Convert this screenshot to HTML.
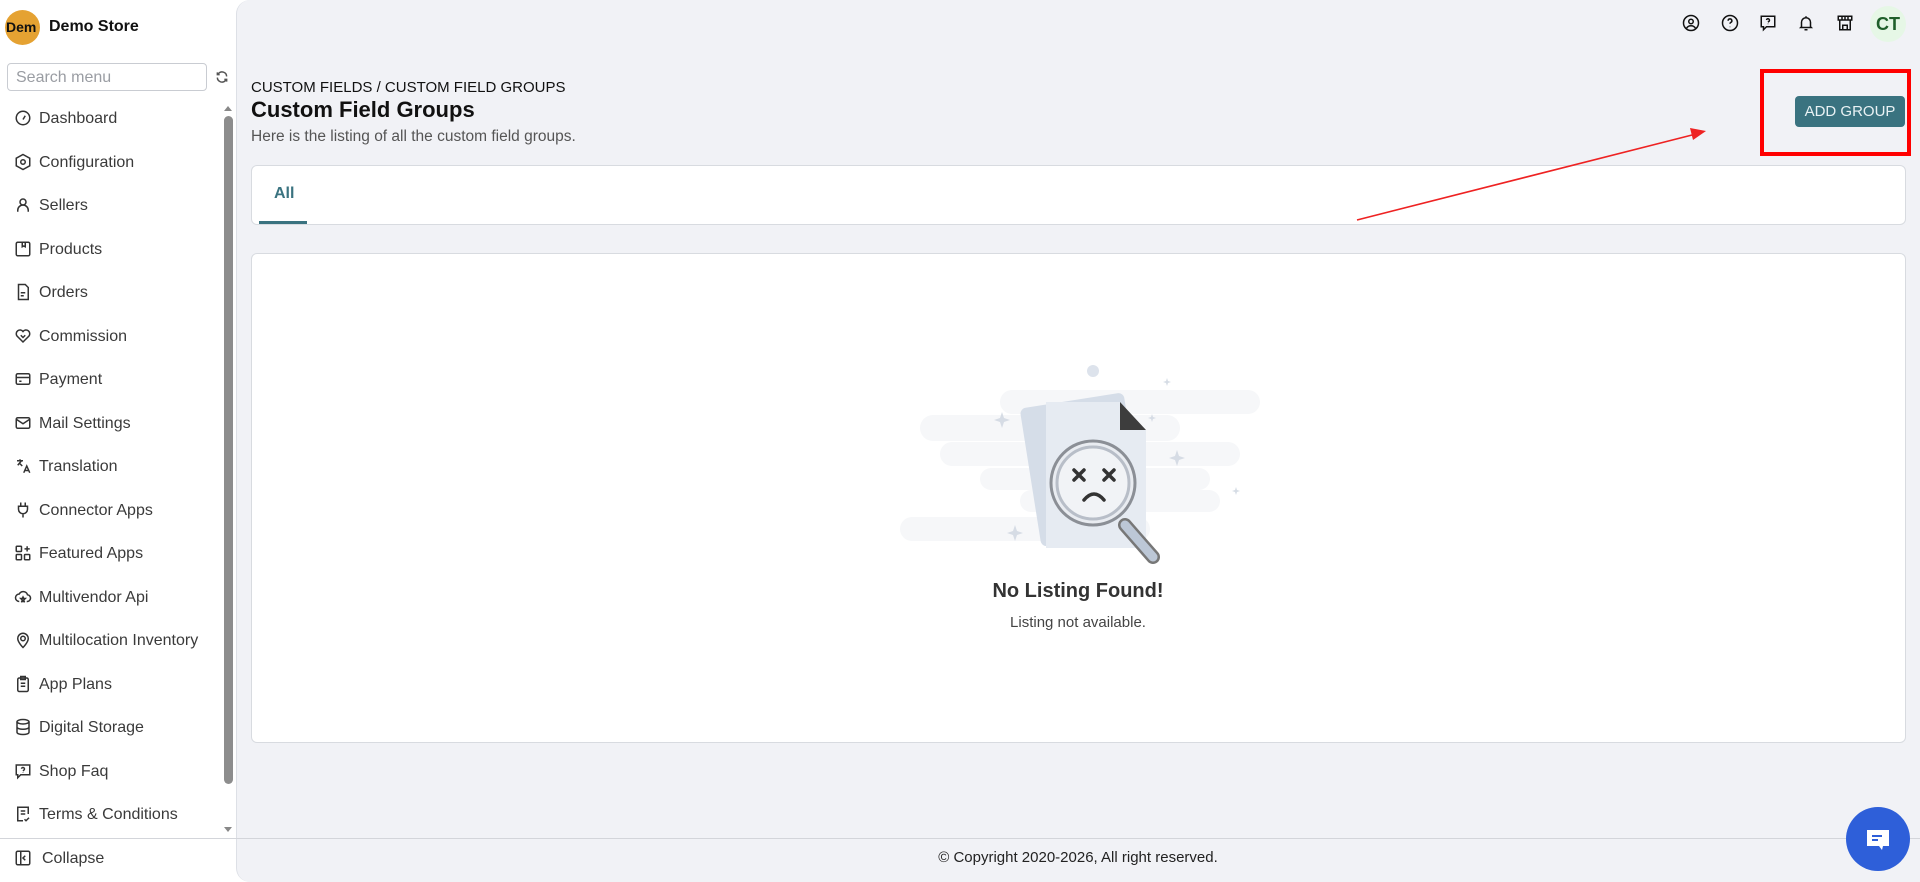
<!DOCTYPE html>
<html><head><meta charset="utf-8"><style>
*{box-sizing:border-box;margin:0;padding:0}
body{width:1920px;height:882px;overflow:hidden;background:#fff;font-family:"Liberation Sans",sans-serif;position:relative;color:#222}
.side{position:absolute;left:0;top:0;width:236px;height:882px;background:#fff}
.main{position:absolute;left:236px;top:0;width:1684px;height:882px;background:#f1f2f6;border-left:1px solid #dde0e6;border-radius:14px 0 0 14px}
.logo{position:absolute;left:5px;top:10px;width:35px;height:35px;border-radius:50%;background:#e5a232;font-size:14px;font-weight:bold;line-height:35px;overflow:hidden;white-space:nowrap;color:#111;padding-left:1px}
.store{position:absolute;left:49px;top:18px;font-size:16px;font-weight:bold;color:#111}
.search{position:absolute;left:7px;top:63px;width:200px;height:28px;border:1px solid #c9ccd2;border-radius:4px;font-size:16px;color:#9a9da3;padding:5px 8px}
.mi{position:absolute;left:14px;height:44px;display:flex;align-items:center;font-size:16px;color:#3a3a3a;white-space:nowrap}
.mi svg{width:18px;height:18px;margin-right:7px;stroke:#333;fill:none;stroke-width:2;margin-top:-2px}
.sb{position:absolute;left:224px;top:116px;width:9px;height:668px;background:#8d8d8d;border-radius:5px}
.bar{position:absolute;left:0;top:838px;width:1920px;height:1px;background:#d3d5da}
.card{position:absolute;background:#fff;border:1px solid #d8dbe0;border-radius:6px}
.btn{position:absolute;left:1795px;top:96px;width:110px;height:31px;background:#3a7380;color:#e9f2f4;border-radius:4px;font-size:15px;text-align:center;line-height:31px}
.hi svg{position:absolute;top:14px;width:18px;height:18px;fill:none;stroke:#111;stroke-width:2}
</style></head><body>
<div class="side">
<div class="logo">Dem</div>
<div class="store">Demo Store</div>
<div class="search">Search menu</div>
<svg style="position:absolute;left:215px;top:70px" width="14" height="14" viewBox="0 0 24 24" fill="none" stroke="#555" stroke-width="2.5"><path d="M20 11a8 8 0 0 0-14-5l-2 2M4 4v4h4M4 13a8 8 0 0 0 14 5l2-2M20 20v-4h-4"/></svg>
<svg style="position:absolute;left:223px;top:104px" width="10" height="8"><path d="M1 7 5 2 9 7z" fill="#888"/></svg>
<svg style="position:absolute;left:223px;top:826px" width="10" height="8"><path d="M1 1 5 6 9 1z" fill="#888"/></svg>
<div class="sb"></div>
<div class="mi" style="top:97px"><svg viewBox="0 0 24 24"><circle cx="12" cy="12" r="9"/><path d="M12 14l3-5"/></svg>Dashboard</div>
<div class="mi" style="top:141px"><svg viewBox="0 0 24 24"><path d="M12 2l9 5v10l-9 5-9-5V7z"/><circle cx="12" cy="12" r="3"/></svg>Configuration</div>
<div class="mi" style="top:184px"><svg viewBox="0 0 24 24"><circle cx="12" cy="8" r="4"/><path d="M5 21v-2a7 7 0 0 1 14 0v2"/></svg>Sellers</div>
<div class="mi" style="top:228px"><svg viewBox="0 0 24 24"><rect x="3" y="3" width="18" height="18" rx="2"/><path d="M11 3v6l2-1 2 1V3"/></svg>Products</div>
<div class="mi" style="top:271px"><svg viewBox="0 0 24 24"><path d="M6 2h9l4 4v16H6z"/><path d="M9 13h6M9 17h4"/></svg>Orders</div>
<div class="mi" style="top:315px"><svg viewBox="0 0 24 24"><path d="M12 20l-8-8a5 5 0 0 1 8-6 5 5 0 0 1 8 6z"/><path d="M9 11l3 3 3-3"/></svg>Commission</div>
<div class="mi" style="top:358px"><svg viewBox="0 0 24 24"><rect x="3" y="5" width="18" height="14" rx="2"/><path d="M3 10h18M7 15h3"/></svg>Payment</div>
<div class="mi" style="top:402px"><svg viewBox="0 0 24 24"><rect x="3" y="5" width="18" height="14" rx="2"/><path d="M3 7l9 6 9-6"/></svg>Mail Settings</div>
<div class="mi" style="top:445px"><svg viewBox="0 0 24 24"><path d="M4 5h8M8 3v2M5 11l5-6M8 9l3 3M13 21l4-9 4 9M14 18h6"/></svg>Translation</div>
<div class="mi" style="top:489px"><svg viewBox="0 0 24 24"><path d="M9 2v5M15 2v5M6 7h12v4a6 6 0 0 1-12 0zM12 17v5"/></svg>Connector Apps</div>
<div class="mi" style="top:532px"><svg viewBox="0 0 24 24"><rect x="3" y="3" width="7" height="7" rx="1"/><rect x="3" y="14" width="7" height="7" rx="1"/><rect x="14" y="14" width="7" height="7" rx="1"/><path d="M17.5 3v7M14 6.5h7"/></svg>Featured Apps</div>
<div class="mi" style="top:576px"><svg viewBox="0 0 24 24"><path d="M7 18a5 5 0 0 1 0-10 6 6 0 0 1 11 1 4 4 0 0 1-1 9"/><path d="M12 12l1 2h2l-2 2 1 3-2-2-2 2 1-3-2-2h2z"/></svg>Multivendor Api</div>
<div class="mi" style="top:619px"><svg viewBox="0 0 24 24"><path d="M12 22s7-7 7-12a7 7 0 0 0-14 0c0 5 7 12 7 12z"/><circle cx="12" cy="10" r="3"/></svg>Multilocation Inventory</div>
<div class="mi" style="top:663px"><svg viewBox="0 0 24 24"><rect x="5" y="4" width="14" height="18" rx="2"/><path d="M9 2h6v4H9zM9 11h6M9 15h6"/></svg>App Plans</div>
<div class="mi" style="top:706px"><svg viewBox="0 0 24 24"><ellipse cx="12" cy="5" rx="8" ry="3"/><path d="M4 5v14c0 2 4 3 8 3s8-1 8-3V5M4 12c0 2 4 3 8 3s8-1 8-3"/></svg>Digital Storage</div>
<div class="mi" style="top:750px"><svg viewBox="0 0 24 24"><path d="M3 4h18v13H9l-4 4v-4H3z"/><path d="M10 9a2 2 0 1 1 3 2l-1 1M12 14v.5"/></svg>Shop Faq</div>
<div class="mi" style="top:793px"><svg viewBox="0 0 24 24"><path d="M19 12V3H5v18h7"/><path d="M9 8h6M9 12h6M14 19l2 2 4-4"/></svg>Terms &amp; Conditions</div>
<div class="mi" style="top:837px"><svg viewBox="0 0 24 24" style="margin-right:10px"><rect x="3" y="3" width="18" height="18" rx="2"/><path d="M9 3v18M15 9l-3 3 3 3"/></svg>Collapse</div>
</div>
<div class="main"></div>
<div class="bar"></div>
<div style="position:absolute;left:236px;width:1684px;top:849px;text-align:center;font-size:15px;color:#222">© Copyright 2020-2026, All right reserved.</div>
<div class="hi">
<svg style="left:1682px" viewBox="0 0 24 24"><circle cx="12" cy="12" r="10"/><circle cx="12" cy="10" r="3"/><path d="M6 19a7 7 0 0 1 12 0"/></svg>
<svg style="left:1721px" viewBox="0 0 24 24"><circle cx="12" cy="12" r="10"/><path d="M9.5 9a2.5 2.5 0 1 1 3.5 2.3c-.7.4-1 .9-1 1.7M12 17v.5"/></svg>
<svg style="left:1759px" viewBox="0 0 24 24"><path d="M3 3h18v14H10l-4 4v-4H3z"/><path d="M10 8a2 2 0 1 1 3 2l-1 1M12 13v.5"/></svg>
<svg style="left:1797px" viewBox="0 0 24 24"><path d="M6 17V11a6 6 0 0 1 12 0v6l1 1H5zM10 21h4M12 3v2"/></svg>
<svg style="left:1836px" viewBox="0 0 24 24"><path d="M3 3h18v5H3zM5 8v13h14V8M9 21v-6h6v6M8 3v5M12 3v5M16 3v5"/></svg>
</div>
<div style="position:absolute;left:1870px;top:6px;width:36px;height:36px;border-radius:50%;background:#e6f7e6;color:#1f5f2a;font-weight:bold;font-size:18px;line-height:36px;text-align:center">CT</div>
<div style="position:absolute;left:251px;top:79px;font-size:15px;color:#111">CUSTOM FIELDS / CUSTOM FIELD GROUPS</div>
<div style="position:absolute;left:251px;top:97px;font-size:22px;font-weight:bold;color:#111">Custom Field Groups</div>
<div style="position:absolute;left:251px;top:128px;font-size:15.5px;color:#555">Here is the listing of all the custom field groups.</div>
<div class="btn">ADD GROUP</div>
<div style="position:absolute;left:1760px;top:69px;width:151px;height:87px;border:4px solid #f00"></div>
<div class="card" style="left:251px;top:165px;width:1655px;height:60px">
<div style="position:absolute;left:22px;top:19px;font-size:16px;font-weight:bold;color:#3a7380">All</div>
<div style="position:absolute;left:7px;top:55px;width:48px;height:3px;background:#3a7380"></div>
</div>
<svg style="position:absolute;left:0;top:0" width="1920" height="882"><line x1="1357" y1="220" x2="1696" y2="134" stroke="#e22" stroke-width="1.6"/><path d="M1706 131 1690 128 1693 140z" fill="#e22"/></svg>
<div class="card" style="left:251px;top:253px;width:1655px;height:490px"></div>
<svg style="position:absolute;left:880px;top:350px" width="400" height="215" viewBox="0 0 400 215">
<g fill="#f6f7f9"><rect x="120" y="40" width="260" height="24" rx="12"/><rect x="40" y="65" width="260" height="26" rx="13"/><rect x="60" y="92" width="300" height="24" rx="12"/><rect x="100" y="118" width="230" height="22" rx="11"/><rect x="140" y="140" width="200" height="22" rx="11"/><rect x="20" y="167" width="250" height="24" rx="12"/></g>
<circle cx="213" cy="21" r="6" fill="#dde3ec"/>
<g fill="#d6dce5"><path d="M122 62l2 6 6 2-6 2-2 6-2-6-6-2 6-2z"/><path d="M135 175l2 6 6 2-6 2-2 6-2-6-6-2 6-2z"/><path d="M297 100l2 6 6 2-6 2-2 6-2-6-6-2 6-2z"/><path d="M287 28l1 3 3 1-3 1-1 3-1-3-3-1 3-1z"/><path d="M356 137l1 3 3 1-3 1-1 3-1-3-3-1 3-1z"/><path d="M272 64l1 3 3 1-3 1-1 3-1-3-3-1 3-1z"/></g>
<rect x="150" y="50" width="105" height="140" rx="6" fill="#d5dde8" transform="rotate(-9 200 120)"/>
<path d="M166 52h74l26 28v118H166z" fill="#e6ebf2"/>
<path d="M240 52l26 28h-26z" fill="#3d3d3d"/>
<path d="M245 175l28 32" stroke="#777" stroke-width="14" stroke-linecap="round"/>
<path d="M245 175l28 32" stroke="#bcc7d6" stroke-width="9" stroke-linecap="round"/>
<circle cx="213" cy="133" r="42" fill="#e9ecf1" stroke="#8b8f96" stroke-width="3"/>
<circle cx="213" cy="133" r="36" fill="#f1f3f6" stroke="#b8bec8" stroke-width="3"/>
<path d="M194 120l10 10M204 120l-10 10M224 120l10 10M234 120l-10 10M204 150q10-12 20 0" stroke="#333" stroke-width="3.5" fill="none" stroke-linecap="round"/>
</svg>
<div style="position:absolute;left:236px;width:1684px;top:580px;text-align:center;font-size:20px;font-weight:bold;color:#333">No Listing Found!</div>
<div style="position:absolute;left:236px;width:1684px;top:614px;text-align:center;font-size:15px;color:#444">Listing not available.</div>
<div style="position:absolute;left:1846px;top:807px;width:64px;height:64px;border-radius:50%;background:#2e5fd9"></div>
<svg style="position:absolute;left:1864px;top:826px" width="28" height="28" viewBox="0 0 28 28"><path d="M3 4h22v16h-6l-1 4-3-4H3z" fill="#fff"/><path d="M8 10h10M8 14h6" stroke="#2e5fd9" stroke-width="2"/></svg>
</body></html>
